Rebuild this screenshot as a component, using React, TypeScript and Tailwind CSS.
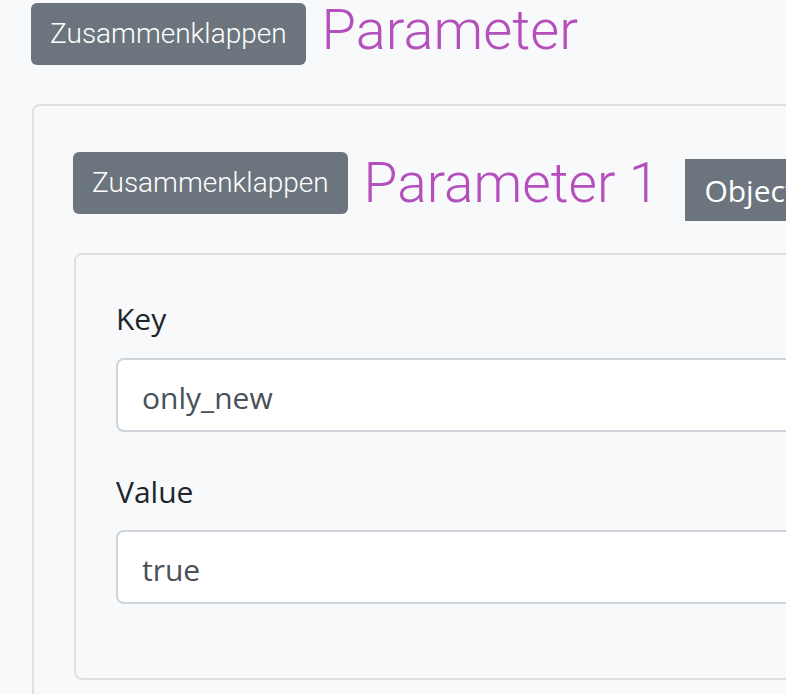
import React from 'react';

const ROBOTO = { fontFamily: 'Roboto, "Liberation Sans", sans-serif' };

// ── Collapse button ─────────────────────────────────────────────
function CollapseButton({ className = '' }: { className?: string }) {
  return (
    <button
      className={`h-[62px] px-[19px] rounded-[6px] bg-[#6c757d] text-white text-[28px] font-light leading-none shrink-0 ${className}`}
      style={ROBOTO}
    >
      Zusammenklappen
    </button>
  );
}

function Field({ label, value, top, gap }: { label: string; value: string; top: string; gap: string }) {
  return (
    <div className={top}>
      <label className="block text-[30px] leading-[45px] text-[#212529]">{label}</label>
      <input
        readOnly
        value={value}
        className={`${gap} block w-full h-[74px] pl-[24px] pt-[4px] bg-white border-2 border-[#ced4da] rounded-[8px] text-[30px] text-[#495057] outline-none`}
        style={{ fontFamily: '"Open Sans", "Noto Sans", sans-serif' }}
      />
    </div>
  );
}

export default function App() {
  return (
    <div
      className="w-[786px] h-[694px] overflow-hidden bg-[#f8f9fa]"
      style={{ fontFamily: '"Open Sans", "Noto Sans", sans-serif' }}
    >
      <div className="w-[1200px]">
        {/* ── Top row ─────────────────────────────────────────── */}
        <div className="flex items-center pl-[31px] pt-[3px]">
          <CollapseButton />
          <h2 className="ml-[16px] text-[56px] font-light leading-none text-[#b44fbb] -mt-[8px]" style={ROBOTO}>
            Parameter
          </h2>
        </div>

        {/* ── Outer card ──────────────────────────────────────── */}
        <div className="mt-[39px] ml-[32px] border-2 border-[#dfe0e2] rounded-[8px] pt-[46px] pl-[39px] pb-[40px]">
          <div className="flex items-start">
            <CollapseButton className="h-[61px]" />
            <h3 className="ml-[16px] mt-[-2px] text-[55px] font-light leading-[67px] text-[#b44fbb]" style={ROBOTO}>
              Parameter 1
            </h3>
            <span className="ml-[26px] mt-[7px] h-[62px] flex items-center px-[19px] bg-[#6c757d] text-white text-[30px]">
              Object
            </span>
          </div>

          {/* ── Inner card ────────────────────────────────────── */}
          <div className="mt-[32px] ml-[1px] border-2 border-[#dfe0e2] rounded-[8px] pt-[41px] pl-[40px] pr-[40px] pb-[74px]">
            <Field label="Key" value="only_new" top="" gap="mt-[17px]" />
            <Field label="Value" value="true" top="mt-[37px]" gap="mt-[16px]" />
          </div>
        </div>
      </div>
    </div>
  );
}
